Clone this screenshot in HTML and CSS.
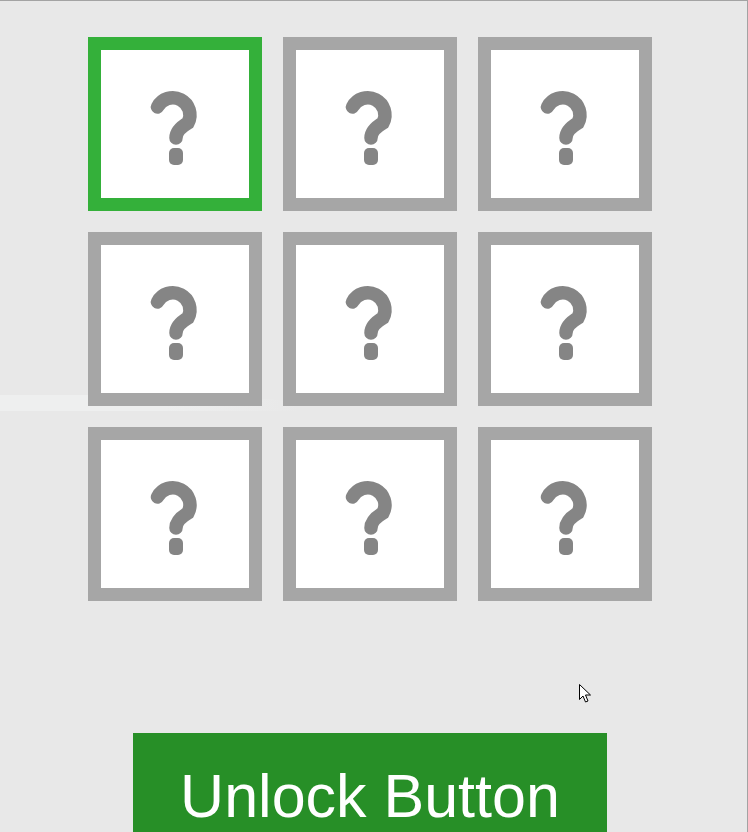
FILE: index.html
```html
<!DOCTYPE html>
<html>
<head>
<meta charset="utf-8">
<link rel="stylesheet" href="styles.css">
</head>
<body>
<div class="page">
  <div class="glare"></div>
  <div class="grid">
    <div class="tile active"><svg class="q" viewBox="0 0 148 148"><path d="M56.5 57 A17 17 0 1 1 87 72.9 Q75 80 75 88" /><rect x="68" y="98" width="14" height="17" rx="5"/></svg></div>
    <div class="tile"><svg class="q" viewBox="0 0 148 148"><path d="M56.5 57 A17 17 0 1 1 87 72.9 Q75 80 75 88" /><rect x="68" y="98" width="14" height="17" rx="5"/></svg></div>
    <div class="tile"><svg class="q" viewBox="0 0 148 148"><path d="M56.5 57 A17 17 0 1 1 87 72.9 Q75 80 75 88" /><rect x="68" y="98" width="14" height="17" rx="5"/></svg></div>
    <div class="tile"><svg class="q" viewBox="0 0 148 148"><path d="M56.5 57 A17 17 0 1 1 87 72.9 Q75 80 75 88" /><rect x="68" y="98" width="14" height="17" rx="5"/></svg></div>
    <div class="tile"><svg class="q" viewBox="0 0 148 148"><path d="M56.5 57 A17 17 0 1 1 87 72.9 Q75 80 75 88" /><rect x="68" y="98" width="14" height="17" rx="5"/></svg></div>
    <div class="tile"><svg class="q" viewBox="0 0 148 148"><path d="M56.5 57 A17 17 0 1 1 87 72.9 Q75 80 75 88" /><rect x="68" y="98" width="14" height="17" rx="5"/></svg></div>
    <div class="tile"><svg class="q" viewBox="0 0 148 148"><path d="M56.5 57 A17 17 0 1 1 87 72.9 Q75 80 75 88" /><rect x="68" y="98" width="14" height="17" rx="5"/></svg></div>
    <div class="tile"><svg class="q" viewBox="0 0 148 148"><path d="M56.5 57 A17 17 0 1 1 87 72.9 Q75 80 75 88" /><rect x="68" y="98" width="14" height="17" rx="5"/></svg></div>
    <div class="tile"><svg class="q" viewBox="0 0 148 148"><path d="M56.5 57 A17 17 0 1 1 87 72.9 Q75 80 75 88" /><rect x="68" y="98" width="14" height="17" rx="5"/></svg></div>
  </div>
  <button class="unlock">Unlock Button</button>
  <svg class="cursor" width="14" height="20" viewBox="0 0 14 20"><path d="M0.5 0.5 L0.5 15.5 L4 12 L6.5 18 L9 17 L6.5 11 L11.5 11 Z" fill="#fff" stroke="#000" stroke-width="1"/></svg>
</div>
</body>
</html>
```
FILE: styles.css
```css
html, body {
  margin: 0;
  padding: 0;
  background: #e8e8e8;
}
.page {
  position: relative;
  width: 747px;
  height: 831px;
  border-top: 1px solid #a3a3a3;
  border-right: 1px solid #a3a3a3;
  overflow: hidden;
  font-family: "Liberation Sans", Arial, sans-serif;
}
.glare {
  position: absolute;
  left: 0;
  top: 394px;
  width: 300px;
  height: 16px;
  background: linear-gradient(to right, #eeefef 0%, #eeefef 55%, rgba(238,239,239,0) 100%);
  border-radius: 0 60% 0 0;
}
.grid {
  position: relative;
  margin: 36px 0 0 88px;
  display: grid;
  grid-template-columns: repeat(3, 174px);
  grid-auto-rows: 174px;
  gap: 21px;
}
.tile {
  box-sizing: border-box;
  border: 13px solid #a6a6a6;
  background: #fff;
}
.tile.active {
  border-color: #34b03a;
}
.q {
  display: block;
  width: 148px;
  height: 148px;
}
.q path {
  fill: none;
  stroke: #858585;
  stroke-width: 13.5;
  stroke-linecap: round;
}
.q rect {
  fill: #858585;
}
.unlock {
  display: block;
  box-sizing: border-box;
  margin: 132px 0 0 133px;
  width: 474px;
  height: 120px;
  border: none;
  padding: 33px 0 27px 0;
  background: #278f27;
  color: #fff;
  font-family: "Liberation Sans", Arial, sans-serif;
  font-size: 61px;
  line-height: 60px;
}
.cursor {
  position: absolute;
  left: 579px;
  top: 683px;
}
```
